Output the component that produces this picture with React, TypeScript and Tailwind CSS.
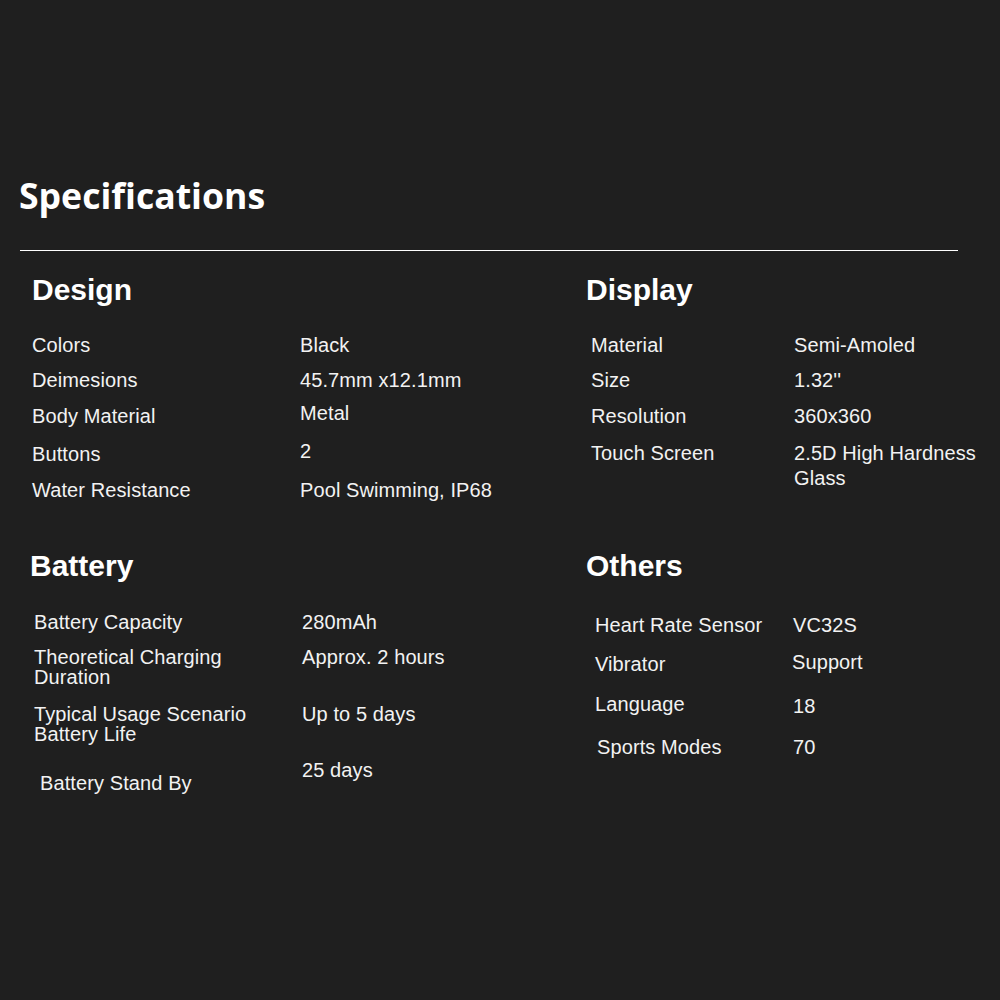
import React from "react";

export default function App() {
  return (
    <div className="w-[1000px] h-[1000px] bg-[#1f1f1f] text-[#f2f2f2] pt-[177px] font-['Liberation_Sans',Arial,sans-serif] overflow-hidden">
      <h1 className="ml-[19px] text-[35.6px] leading-[36px] font-bold font-['Open_Sans',sans-serif] text-white">
        Specifications
      </h1>
      <div className="ml-[20px] mt-[37px] w-[938px] h-px bg-white" />

      {/* Top row: Design | Display */}
      <div className="mt-[24px] h-[276px] flex">
        <div className="w-[556px] pl-[32px]">
          <h2 className="text-[30px] leading-[30px] font-bold text-white">Design</h2>
          <div className="text-[20px] leading-[20px] tracking-[0.1px]">
            <div className="mt-[30px] flex">
              <div className="w-[268px]">Colors</div>
              <div>Black</div>
            </div>
            <div className="mt-[15px] flex">
              <div className="w-[268px]">Deimesions</div>
              <div>45.7mm x12.1mm</div>
            </div>
            <div className="mt-[13px] flex items-start">
              <div className="w-[268px] pt-[3px]">Body Material</div>
              <div>Metal</div>
            </div>
            <div className="mt-[15px] flex items-start">
              <div className="w-[268px] pt-[3px]">Buttons</div>
              <div>2</div>
            </div>
            <div className="mt-[16px] flex">
              <div className="w-[268px]">Water Resistance</div>
              <div>Pool Swimming, IP68</div>
            </div>
          </div>
        </div>
        <div className="flex-1 pl-[30px]">
          <h2 className="text-[30px] leading-[30px] font-bold text-white">Display</h2>
          <div className="text-[20px] leading-[20px] tracking-[0.1px] pl-[5px]">
            <div className="mt-[30px] flex">
              <div className="w-[203px]">Material</div>
              <div>Semi-Amoled</div>
            </div>
            <div className="mt-[15px] flex">
              <div className="w-[203px]">Size</div>
              <div>1.32''</div>
            </div>
            <div className="mt-[16px] flex">
              <div className="w-[203px]">Resolution</div>
              <div>360x360</div>
            </div>
            <div className="mt-[15px] flex items-start">
              <div className="w-[203px] pt-[2px]">Touch Screen</div>
              <div className="w-[196px] leading-[25px]">2.5D High Hardness Glass</div>
            </div>
          </div>
        </div>
      </div>

      {/* Bottom row: Battery | Others */}
      <div className="flex">
        <div className="w-[556px] pl-[30px]">
          <h2 className="text-[30px] leading-[30px] font-bold text-white">Battery</h2>
          <div className="text-[20px] leading-[20px] tracking-[0.1px] pl-[4px]">
            <div className="mt-[31px] flex items-start">
              <div className="w-[268px]">Battery Capacity</div>
              <div>280mAh</div>
            </div>
            <div className="mt-[15px] flex items-start">
              <div className="w-[268px] pr-[30px]">Theoretical Charging Duration</div>
              <div>Approx. 2 hours</div>
            </div>
            <div className="mt-[17px] flex items-start">
              <div className="w-[268px] pr-[20px]">Typical Usage Scenario Battery Life</div>
              <div>Up to 5 days</div>
            </div>
            <div className="mt-[16px] flex items-start">
              <div className="w-[268px] pt-[13px] pl-[6px]">Battery Stand By</div>
              <div>25 days</div>
            </div>
          </div>
        </div>
        <div className="flex-1 pl-[30px]">
          <h2 className="text-[30px] leading-[30px] font-bold text-white">Others</h2>
          <div className="text-[20px] leading-[20px] tracking-[0.1px] pl-[9px]">
            <div className="mt-[34px] flex items-start">
              <div className="w-[198px]">Heart Rate Sensor</div>
              <div>VC32S</div>
            </div>
            <div className="mt-[17px] flex items-start">
              <div className="w-[197px] pt-[2px]">Vibrator</div>
              <div>Support</div>
            </div>
            <div className="mt-[20px] flex items-start">
              <div className="w-[198px]">Language</div>
              <div className="pt-[2px]">18</div>
            </div>
            <div className="mt-[21px] flex items-start">
              <div className="w-[198px] pl-[2px]">Sports Modes</div>
              <div>70</div>
            </div>
          </div>
        </div>
      </div>
    </div>
  );
}
